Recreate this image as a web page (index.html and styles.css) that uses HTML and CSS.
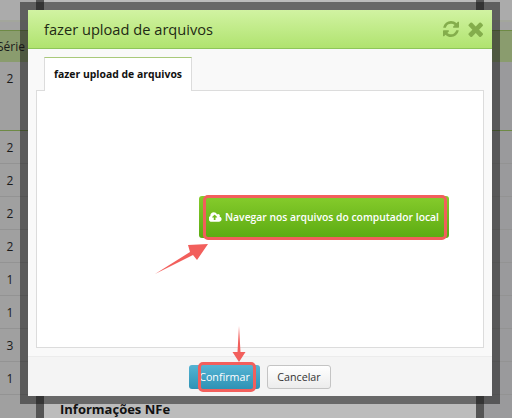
FILE: index.html
```html
<!DOCTYPE html>
<html lang="pt">
<head>
<meta charset="utf-8">
<title>fazer upload de arquivos</title>
<link rel="stylesheet" href="styles.css">
</head>
<body>
<div class="page">
  <div class="table">
    <div class="gap"></div>
    <div class="row head">Série</div>
    <div class="row first">2</div>
    <div class="row">2</div>
    <div class="row">2</div>
    <div class="row">2</div>
    <div class="row">2</div>
    <div class="row">1</div>
    <div class="row">1</div>
    <div class="row">3</div>
    <div class="row">1</div>
  </div>
  <div class="band"></div>
  <div class="panel"><h2 class="nfe">Informações NFe</h2></div>
  <div class="band"></div>
  <div class="table side">
    <div class="gap"></div>
    <div class="row head"></div>
    <div class="row first"></div>
    <div class="row"></div>
    <div class="row"></div>
    <div class="row"></div>
    <div class="row"></div>
    <div class="row"></div>
    <div class="row"></div>
    <div class="row"></div>
    <div class="row"></div>
  </div>
</div>
<div class="frame"></div>
<div class="modal">
  <header class="m-head">
    <h1 class="m-title">fazer upload de arquivos</h1>
    <div class="m-tools">
      <svg class="ic" viewBox="128 128 1536 1536" width="16" height="16"><path d="M1639 1056q0 5-1 7-64 268-268 434.500t-478 166.500q-146 0-282.500-55t-243.500-157l-129 129q-19 19-45 19t-45-19-19-45v-448q0-26 19-45t45-19h448q26 0 45 19t19 45-19 45l-137 137q71 66 161 102t187 36q134 0 250-65t186-179q11-17 53-117 8-23 30-23h192q13 0 22.500 9.500t9.500 22.500zm25-800v448q0 26-19 45t-45 19h-448q-26 0-45-19t-19-45 19-45l138-138q-148-137-349-137-134 0-250 65t-186 179q-11 17-53 117-8 23-30 23h-199q-13 0-22.500-9.500t-9.500-22.500v-7q65-268 270-434.500t480-166.500q146 0 284 55.500t245 156.500l130-129q19-19 45-19t45 19 19 45z"/></svg>
      <svg class="ic" viewBox="266 330 1224 1224" width="15" height="15"><path d="M1490 1322q0 40-28 68l-136 136q-28 28-68 28t-68-28l-294-294-294 294q-28 28-68 28t-68-28l-136-136q-28-28-28-68t28-68l294-294-294-294q-28-28-28-68t28-68l136-136q28-28 68-28t68 28l294 294 294-294q28-28 68-28t68 28l136 136q28 28 28 68t-28 68l-294 294 294 294q28 28 28 68z"/></svg>
    </div>
  </header>
  <div class="m-body">
    <div class="tabs"><div class="tab">fazer upload de arquivos</div></div>
    <div class="pane">
      <button class="browse">
        <svg class="cloud" viewBox="0 128 1920 1408" width="13" height="10"><path d="M1216 864q0-14-9-23l-352-352q-9-9-23-9t-23 9l-351 351q-10 12-10 24 0 14 9 23t23 9h224v352q0 13 9.500 22.500t22.500 9.500h192q13 0 22.500-9.500t9.500-22.500v-352h224q13 0 22.500-9.500t9.500-22.500zm640 288q0 159-112.500 271.500t-271.500 112.500h-1088q-185 0-316.500-131.500t-131.500-316.500q0-130 70-240t188-165q-2-30-2-43 0-212 150-362t362-150q156 0 285.500 87t188.500 231q71-62 166-62 106 0 181 75t75 181q0 76-41 138 130 31 213.500 135.500t83.500 238.500z"/></svg>
        Navegar nos arquivos do computador local
      </button>
      <div class="mark-browse"></div>
      <svg class="arrow-a" viewBox="0 0 56 36" width="56" height="36"><path d="M1 34 36 12 34 5 54 4 43 20 39 15Z"/></svg>
    </div>
  </div>
  <footer class="m-foot">
    <div class="confirm-wrap">
      <button class="confirm">Confirmar</button>
      <div class="mark-confirm"></div>
      <svg class="arrow-b" viewBox="0 0 14 37" width="14" height="37"><path d="M7 0 8.500 26H13.500L7 36 .5 26H5.500Z"/></svg>
    </div>
    <button class="cancel">Cancelar</button>
  </footer>
</div>
</body>
</html>
```
FILE: styles.css
```css
* { box-sizing: border-box; }
html, body { margin: 0; height: 100%; overflow: hidden; }
body { width: 512px; height: 418px; position: relative; background: #a2a2a2; font-family: "Open Sans", "Liberation Sans", sans-serif; color: #1a1a1a; }
.page { display: flex; width: 512px; height: 418px; }
.table { width: 36px; flex: none; background: #a0a0a0; overflow: hidden; }
.side { width: 28px; background: #9a9a9c; }
.gap { height: 30px; background: linear-gradient(#ababab 0, #ababab 20px, #a3a69c 20px, #a3a69c 22px, #a2a2a2 22px); }
.row { height: 33px; display: flex; align-items: center; justify-content: center; font-size: 12px; border-bottom: 1px solid #939393; padding-right: 16px; }
.head { height: 32px; background: #8a9c6e; border-top: 1px solid #6e8a45; border-bottom: 1px solid #8a9c6e; justify-content: flex-start; padding-right: 0; text-indent: -3px; white-space: nowrap; overflow: hidden; }
.first { height: 69px; align-items: flex-start; padding-top: 8px; border-bottom-color: #6e8a45; }
.band { width: 8px; flex: none; background: #555; }
.panel { width: 432px; flex: none; background: #bcbcbc; display: flex; align-items: flex-end; }
.nfe { margin: 0 0 0 16px; font-size: 13px; font-weight: 700; line-height: 18px; color: #111; font-family: "Open Sans", "Liberation Sans", sans-serif; }
.frame { position: absolute; left: 20px; top: 2px; width: 480px; height: 402px; background: rgba(20,20,20,.5); }
.modal { position: absolute; left: 28px; top: 10px; width: 464px; height: 386px; background: #f9f9f9; display: flex; flex-direction: column; }
.m-head { height: 39px; flex: none; display: flex; align-items: center; justify-content: space-between; padding: 0 9px 0 16px; background: linear-gradient(#d1f3a2, #b0e36f); border-bottom: 1px solid #8ec65a; }
.m-title { margin: 0; font-size: 14.650px; font-weight: 400; line-height: 20px; color: #1f2a14; }
.m-tools { display: flex; align-items: center; gap: 9px; }
.ic { fill: #84ad4c; display: block; }
.m-body { flex: 1; display: flex; flex-direction: column; padding: 8px; min-height: 0; }
.tabs { height: 33px; flex: none; padding-left: 8px; }
.tab { width: 148px; height: 34px; background: #fff; border: 1px solid #dcdcdc; border-top: 1px solid #a9c97a; border-bottom: 0; position: relative; z-index: 1; font-size: 10.400px; font-weight: 700; line-height: 33px; text-align: center; color: #111; white-space: nowrap; }
.pane { flex: 1; background: #fff; border: 1px solid #dcdcdc; position: relative; }
.browse { position: absolute; left: 162px; top: 105px; width: 250px; height: 42px; border: 0; border-radius: 3px; padding: 0 0 0 10px; background: linear-gradient(#86cc2c, #5cab12); color: #fff; font: 600 10.350px "Open Sans", "Liberation Sans", sans-serif; display: flex; align-items: center; gap: 3px; white-space: nowrap; }
.cloud { fill: #fff; flex: none; }
.mark-browse { position: absolute; left: 166px; top: 104px; width: 244px; height: 45px; border: 3px solid #f25f5c; border-radius: 5px; }
.arrow-a { position: absolute; left: 117px; top: 149px; fill: #f25f5c; }
.m-foot { height: 40px; flex: none; display: flex; align-items: center; justify-content: center; gap: 7px; background: #f4f4f4; border-top: 1px solid #ececec; }
.confirm-wrap { position: relative; }
.confirm, .cancel { display: block; height: 24px; border-radius: 3px; font: 400 10.700px "Open Sans", "Liberation Sans", sans-serif; padding: 0; }
.confirm { width: 71px; border: 0; background: linear-gradient(#55b4d4, #2e92b5); color: #fff; }
.cancel { width: 64px; border: 1px solid #c4c4c4; background: linear-gradient(#fff, #ececec); color: #333; }
.mark-confirm { position: absolute; left: 9px; top: -3px; width: 58px; height: 30px; border: 3px solid #f25f5c; border-radius: 5px; }
.arrow-b { position: absolute; left: 43px; top: -39px; fill: #f25f5c; }
```
